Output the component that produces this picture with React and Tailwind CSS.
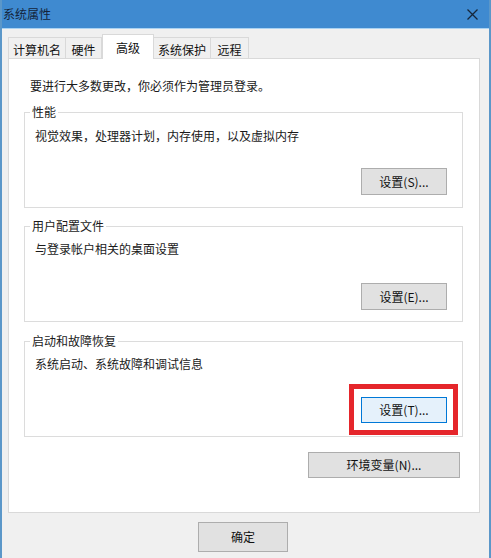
import React from "react";

const FONT = { fontFamily: '"Noto Sans CJK SC", "Noto Sans", sans-serif' };

const TABS = [
  { label: "计算机名", w: "w-[58px]" },
  { label: "硬件", w: "w-[37px]" },
  { label: "高级", w: "w-[52px]", active: true },
  { label: "系统保护", w: "w-[58px]" },
  { label: "远程", w: "w-[39px]" },
];

function Button({ children, className = "", focused = false }) {
  return (
    <button
      type="button"
      className={`flex items-center justify-center border text-[12px] leading-none text-[#111] ${
        focused ? "bg-[#e5f1fb] border-[#0078d7]" : "bg-[#e1e1e1] border-[#adadad]"
      } ${className}`}
    >
      {children}
    </button>
  );
}

// Group box with a caption sitting on the top border
function GroupBox({ title, text, button, textTop, buttonTop, highlight, className = "" }) {
  return (
    <fieldset className={`border border-[#dcdcdc] h-[104px] ${className}`}>
      <legend className="ml-[5px] px-[2px] text-[12px] leading-[16px] text-[#1a1a1a]">{title}</legend>
      <div className="px-[10px] text-[12px] leading-[16px] text-[#1a1a1a]" style={{ marginTop: textTop }}>
        {text}
      </div>
      <div className="flex justify-end pr-[15px]" style={{ marginTop: buttonTop }}>
        <div className="relative">
          <Button className={highlight ? "w-[86px] h-[26px]" : "w-[86px] h-[27px]"} focused={highlight}>
            {button}
          </Button>
          {highlight && (
            <div className="absolute -left-[12px] -right-[11px] -top-[13px] -bottom-[12px] border-[5px] border-[#e5262b]" />
          )}
        </div>
      </div>
    </fieldset>
  );
}

export default function App() {
  return (
    <div
      className="w-[491px] h-[558px] overflow-hidden bg-[#f0f0f0] border-l-2 border-r-2 border-[#5b97c9] flex flex-col"
      style={FONT}
    >
      {/* title bar */}
      <div className="h-[28px] shrink-0 bg-[#3f8ad0] flex items-center justify-between -mx-[2px] pl-[3px] pr-[13px]">
        <span className="text-[12px] text-[#14243a]">系统属性</span>
        <svg width="11" height="11" viewBox="0 0 11 11" className="text-[#16263a]">
          <path d="M0.5 0.5L10.5 10.5M10.5 0.5L0.5 10.5" stroke="currentColor" strokeWidth="1.3" />
        </svg>
      </div>
      <div className="h-px shrink-0 bg-[#a9d2f2] -mx-[2px]" />

      {/* tab strip */}
      <div className="mt-[5px] ml-[6px] h-[24px] flex items-end">
        {TABS.map((t) =>
          t.active ? (
            <div
              key={t.label}
              className={`${t.w} h-[25px] -mb-px pt-[2px] relative z-10 bg-white border border-b-0 border-[#d9d9d9] flex items-center justify-center text-[12px] text-[#111]`}
            >
              {t.label}
            </div>
          ) : (
            <div
              key={t.label}
              className={`${t.w} h-[21px] pt-[3px] border border-b-0 border-[#d9d9d9] -ml-px first:ml-0 flex items-center justify-center text-[12px] text-[#111]`}
            >
              {t.label}
            </div>
          )
        )}
      </div>

      {/* tab page */}
      <div className="ml-[6px] w-[472px] h-[455px] shrink-0 bg-white border border-[#d9d9d9] pl-[15px] pr-[16px]">
        <div className="mt-[19px] ml-[6px] text-[12px] leading-[16px] text-[#1a1a1a]">
          要进行大多数更改，你必须作为管理员登录。
        </div>

        <GroupBox
          className="mt-[10px]"
          title="性能"
          text="视觉效果，处理器计划，内存使用，以及虚拟内存"
          button="设置(S)..."
          textTop={8}
          buttonTop={24}
        />
        <GroupBox
          className="mt-[10px]"
          title="用户配置文件"
          text="与登录帐户相关的桌面设置"
          button="设置(E)..."
          textTop={7}
          buttonTop={26}
        />
        <GroupBox
          className="mt-[11px]"
          title="启动和故障恢复"
          text="系统启动、系统故障和调试信息"
          button="设置(T)..."
          textTop={7}
          buttonTop={25}
          highlight
        />

        <div className="flex justify-end mt-[15px] pr-[3px]">
          <Button className="w-[152px] h-[26px]">环境变量(N)...</Button>
        </div>
      </div>

      {/* dialog buttons */}
      <div className="mt-[9px] ml-[196px] flex">
        <Button className="w-[90px] h-[30px]">确定</Button>
      </div>
    </div>
  );
}
